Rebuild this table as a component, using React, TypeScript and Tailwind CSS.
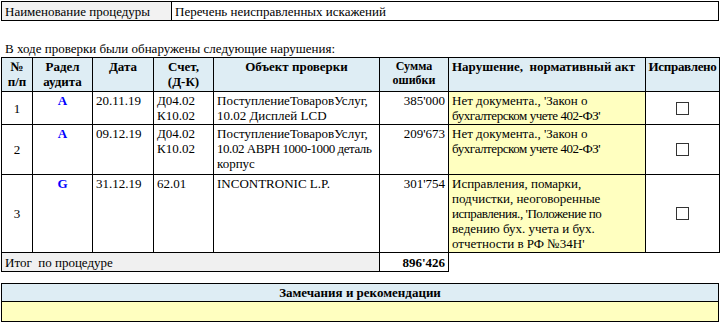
import React from 'react';

const rows = [
  {
    n: '1',
    section: 'A',
    date: '20.11.19',
    account: ['Д04.02', 'К10.02'],
    object: ['ПоступлениеТоваровУслуг,', '10.02 Дисплей LCD'],
    sum: "385'000",
    violation: ["Нет документа., 'Закон о", "бухгалтерском учете 402-ФЗ'"],
    h: 'h-[33px]',
  },
  {
    n: '2',
    section: 'A',
    date: '09.12.19',
    account: ['Д04.02', 'К10.02'],
    object: ['ПоступлениеТоваровУслуг,', '10.02 АВРН 1000-1000 деталь', 'корпус'],
    sum: "209'673",
    violation: ["Нет документа., 'Закон о", "бухгалтерском учете 402-ФЗ'"],
    h: 'h-[50px]',
  },
  {
    n: '3',
    section: 'G',
    date: '31.12.19',
    account: ['62.01'],
    object: ['INCONTRONIC L.P.'],
    sum: "301'754",
    violation: [
      'Исправления, помарки,',
      'подчистки, неоговоренные',
      "исправления., 'Положение по",
      'ведению бух. учета и бух.',
      "отчетности в РФ №34Н'",
    ],
    h: 'h-[78px]',
  },
];

const cell = 'border border-black px-[3px] pt-[1px] pb-[1px] align-top';

function Lines({ items }: { items: string[] }) {
  return (
    <>
      {items.map((t, i) => (
        <div key={i} className={`whitespace-nowrap ${t.length > 25 ? 'tracking-[-0.45px]' : ''}`}>
          {t}
        </div>
      ))}
    </>
  );
}

export default function App() {
  return (
    <div className="bg-white p-[1px] font-['Liberation_Serif',serif] text-[13px] leading-[15px] text-black">
      <table className="w-[718px] table-fixed border-collapse">
        <colgroup>
          <col className="w-[170px]" />
          <col />
        </colgroup>
        <tbody>
          <tr className="h-[19px]">
            <td className="border border-black bg-[#f2f2f2] px-[3px]">Наименование процедуры</td>
            <td className="border border-black px-[3px]">Перечень неисправленных искажений</td>
          </tr>
        </tbody>
      </table>

      <div className="mt-[20px] mb-[1px] pl-[4px]">В ходе проверки были обнаружены следующие нарушения:</div>

      <table className="w-[718px] table-fixed border-collapse">
        <colgroup>
          <col className="w-[31px]" />
          <col className="w-[60px]" />
          <col className="w-[61px]" />
          <col className="w-[60px]" />
          <col className="w-[166px]" />
          <col className="w-[69px]" />
          <col className="w-[197px]" />
          <col className="w-[74px]" />
        </colgroup>
        <thead>
          <tr className="h-[34px] bg-[#deedf4] font-bold">
            <th className={`${cell} text-center`}>
              №<br />п/п
            </th>
            <th className={`${cell} text-center`}>
              Радел<br />аудита
            </th>
            <th className={`${cell} text-center`}>Дата</th>
            <th className={`${cell} text-center`}>
              Счет,<br />(Д-К)
            </th>
            <th className={`${cell} text-center`}>Объект проверки</th>
            <th className={`${cell} text-center text-[12px] leading-[14px]`}>
              Сумма<br />ошибки
            </th>
            <th className={`${cell} text-left whitespace-nowrap`}>Нарушение,&nbsp; нормативный акт</th>
            <th className="border border-black px-0 pt-[1px] text-center align-top whitespace-nowrap tracking-[-0.3px]">
              Исправлено
            </th>
          </tr>
        </thead>
        <tbody>
          {rows.map((r) => (
            <tr key={r.n} className={r.h}>
              <td className="border border-black text-center align-middle">{r.n}</td>
              <td className={`${cell} text-center font-bold text-[#0000ff]`}>{r.section}</td>
              <td className={cell}>{r.date}</td>
              <td className={cell}>
                <Lines items={r.account} />
              </td>
              <td className={`${cell} overflow-hidden`}>
                <Lines items={r.object} />
              </td>
              <td className={`${cell} text-right`}>{r.sum}</td>
              <td className={`${cell} bg-[#ffffc0]`}>
                <Lines items={r.violation} />
              </td>
              <td className="border border-black align-middle">
                <div className="flex justify-center">
                  <span className="block h-[13px] w-[13px] border border-[#333]" />
                </div>
              </td>
            </tr>
          ))}
          <tr className="h-[19px]">
            <td colSpan={5} className="border border-black bg-[#f0f0f0] px-[3px] align-middle">
              Итог&nbsp; по процедуре
            </td>
            <td className="border border-black px-[3px] text-right align-middle font-bold">896'426</td>
            <td />
            <td />
          </tr>
        </tbody>
      </table>

      <table className="mt-[11px] w-[718px] table-fixed border-collapse">
        <tbody>
          <tr className="h-[18px]">
            <td className="border border-black bg-[#deedf4] text-center font-bold">Замечания и рекомендации</td>
          </tr>
          <tr className="h-[20px]">
            <td className="border border-black bg-[#ffffc0]" />
          </tr>
        </tbody>
      </table>
    </div>
  );
}
